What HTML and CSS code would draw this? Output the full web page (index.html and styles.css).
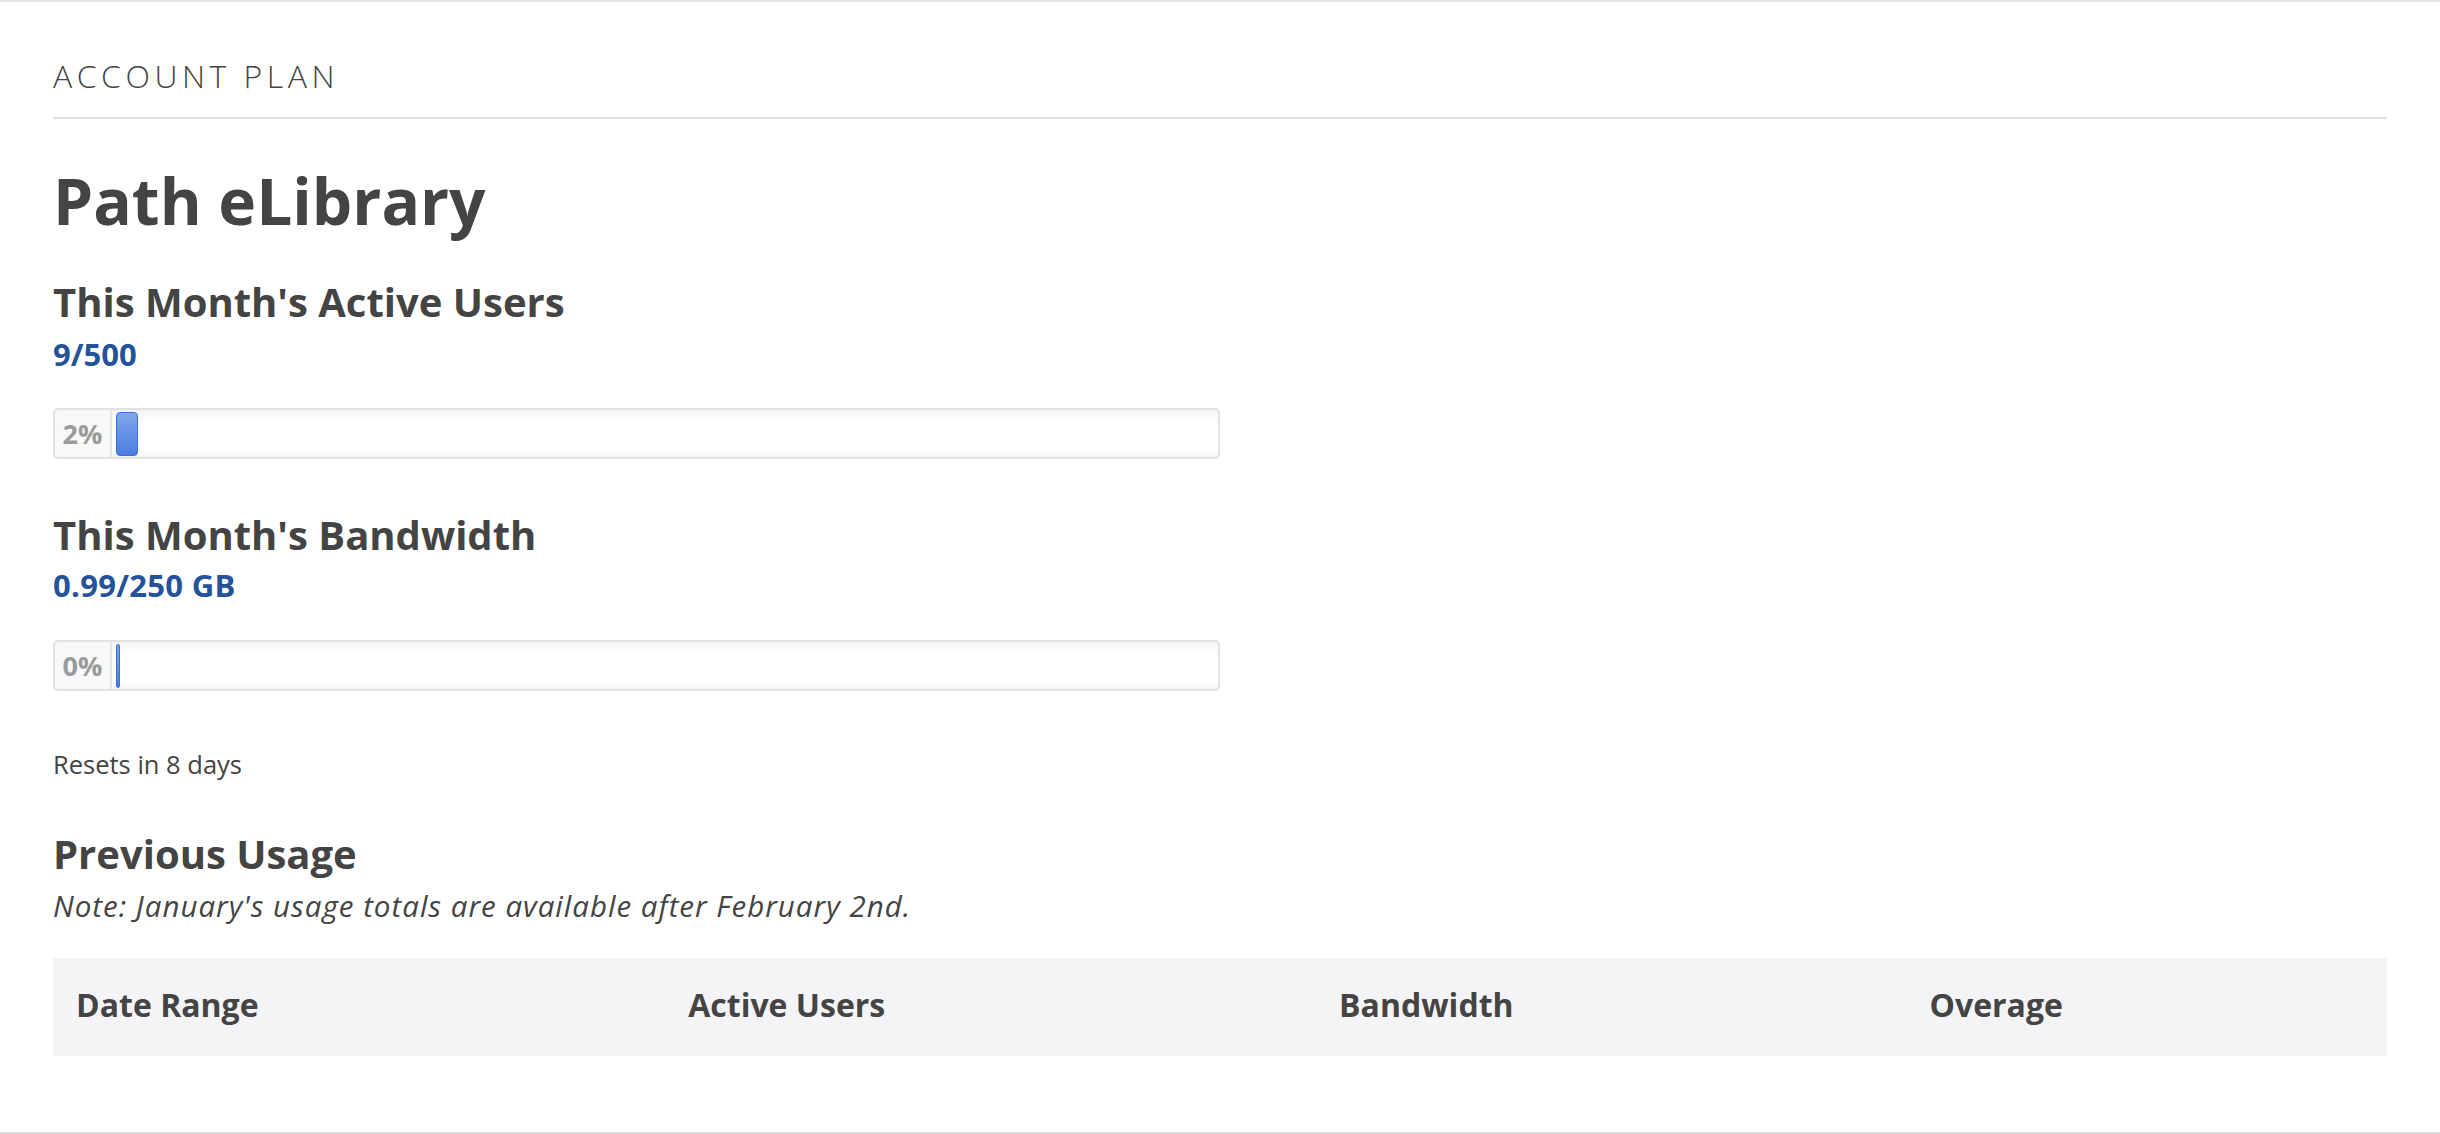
FILE: index.html
```html
<!DOCTYPE html>
<html lang="en">
<head>
<meta charset="utf-8">
<title>Account Plan</title>
<link rel="stylesheet" href="styles.css">
</head>
<body>
<section class="panel">
  <div class="eyebrow">ACCOUNT PLAN</div>
  <hr class="rule">
  <h1 class="plan-name">Path eLibrary</h1>

  <h3 class="metric-title">This Month's Active Users</h3>
  <div class="metric-value">9/500</div>
  <div class="bar first">
    <div class="bar-label">2%</div>
    <div class="bar-track"><div class="bar-fill" style="width:2%"></div></div>
  </div>

  <h3 class="metric-title second">This Month's Bandwidth</h3>
  <div class="metric-value">0.99/250 GB</div>
  <div class="bar">
    <div class="bar-label">0%</div>
    <div class="bar-track"><div class="bar-fill" style="width:0%"></div></div>
  </div>

  <p class="resets">Resets in 8 days</p>

  <h3 class="metric-title prev">Previous Usage</h3>
  <p class="note">Note: January's usage totals are available after February 2nd.</p>

  <table class="usage">
    <thead>
      <tr>
        <th>Date Range</th>
        <th>Active Users</th>
        <th>Bandwidth</th>
        <th>Overage</th>
      </tr>
    </thead>
  </table>
</section>
</body>
</html>
```

FILE: styles.css
```css
html, body {
  margin: 0;
  padding: 0;
  background: #fff;
}

body {
  font-family: "Open Sans", "Liberation Sans", sans-serif;
  color: #444;
}

.panel {
  border-top: 2px solid #e4e4e4;
  border-bottom: 2px solid #dcdcdc;
  padding: 52px 53px 76px;
  display: flex;
  flex-direction: column;
}

.eyebrow {
  font-size: 32px;
  line-height: 44px;
  font-weight: 300;
  letter-spacing: 4.5px;
  color: #444;
}

.rule {
  margin: 19px 0 0;
  border: 0;
  height: 2px;
  background: #e1e1e1;
}

.plan-name {
  margin: 42px 0 0;
  font-size: 64px;
  line-height: 80px;
  font-weight: 700;
  color: #444;
}

.metric-title {
  margin: 37px 0 0;
  font-size: 40px;
  line-height: 48px;
  font-weight: 700;
  color: #444;
}

.metric-title.second {
  margin-top: 52px;
}

.metric-title.prev {
  margin-top: 50px;
}

.metric-value {
  margin-top: 8px;
  font-size: 31px;
  line-height: 40px;
  font-weight: 700;
  color: #24539b;
}

.metric-title.second + .metric-value {
  margin-top: 6px;
  letter-spacing: 0.3px;
}

.bar {
  margin-top: 34px;
  width: 50%;
  height: 51px;
  box-sizing: border-box;
  border: 2px solid #e2e2e2;
  border-radius: 5px;
  display: flex;
  overflow: hidden;
  background: linear-gradient(#f3f3f3, #ffffff 25%, #ffffff 85%, #f6f6f6);
}

.metric-title.second + .metric-value + .bar {
  margin-top: 35px;
}

.bar-label {
  width: 55px;
  flex: none;
  background: #f8f8f8;
  border-right: 2px solid #e6e6e6;
  font-size: 27px;
  font-weight: 700;
  color: #9a9a9a;
  display: flex;
  align-items: center;
  justify-content: center;
}

.bar-track {
  flex: 1;
  display: flex;
  padding: 2px 0 1px 4px;
}

.bar-fill {
  box-sizing: border-box;
  min-width: 4px;
  height: 100%;
  border: 1px solid #3a6fd8;
  border-radius: 4px;
  background: linear-gradient(#80a6ea, #4a7ee0);
}

.resets {
  margin: 57px 0 0;
  font-size: 25.5px;
  line-height: 32px;
  color: #444;
}

.note {
  margin: 8px 0 0;
  font-size: 29.5px;
  line-height: 40px;
  font-style: italic;
  letter-spacing: 1px;
  color: #444;
}

.usage {
  margin-top: 32px;
  width: 100%;
  border-collapse: collapse;
}

.usage th {
  background: #f4f4f6;
  text-align: left;
  font-size: 32px;
  line-height: 40px;
  font-weight: 700;
  color: #444;
  padding: 27px 23px 31px;
}
```
